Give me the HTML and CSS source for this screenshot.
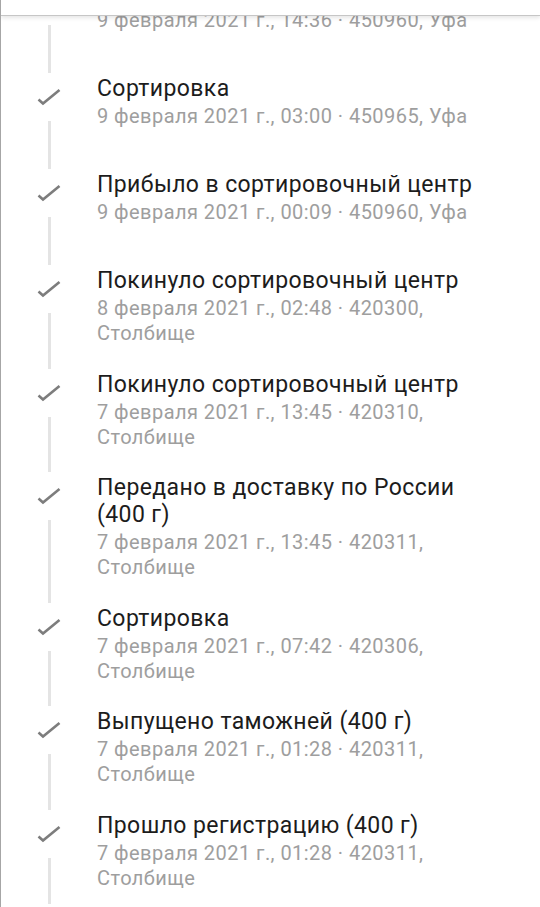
FILE: index.html
```html
<!DOCTYPE html>
<html lang="ru">
<head>
<meta charset="utf-8">
<title>Отслеживание</title>
<link rel="stylesheet" href="styles.css">
</head>
<body>
<div class="page">
  <div class="topbar"></div>
  <ul class="timeline">
    <li class="event">
      <div class="rail"><span class="seg seg-top"></span><span class="check"><svg viewBox="0 0 28 28" width="28" height="28"><polyline points="3.5,16.5 8,20.5 24.5,7"/></svg></span><span class="seg seg-bot"></span></div>
      <div class="info"><div class="title">Обработка</div><div class="meta">9 февраля 2021 г., 14:36 · 450960, Уфа</div></div>
    </li>
    <li class="event">
      <div class="rail"><span class="seg seg-top"></span><span class="check"><svg viewBox="0 0 28 28" width="28" height="28"><polyline points="3.5,16.5 8,20.5 24.5,7"/></svg></span><span class="seg seg-bot"></span></div>
      <div class="info"><div class="title">Сортировка</div><div class="meta">9 февраля 2021 г., 03:00 · 450965, Уфа</div></div>
    </li>
    <li class="event">
      <div class="rail"><span class="seg seg-top"></span><span class="check"><svg viewBox="0 0 28 28" width="28" height="28"><polyline points="3.5,16.5 8,20.5 24.5,7"/></svg></span><span class="seg seg-bot"></span></div>
      <div class="info"><div class="title">Прибыло в сортировочный центр</div><div class="meta">9 февраля 2021 г., 00:09 · 450960, Уфа</div></div>
    </li>
    <li class="event">
      <div class="rail"><span class="seg seg-top"></span><span class="check"><svg viewBox="0 0 28 28" width="28" height="28"><polyline points="3.5,16.5 8,20.5 24.5,7"/></svg></span><span class="seg seg-bot"></span></div>
      <div class="info"><div class="title">Покинуло сортировочный центр</div><div class="meta">8 февраля 2021 г., 02:48 · 420300, Столбище</div></div>
    </li>
    <li class="event">
      <div class="rail"><span class="seg seg-top"></span><span class="check"><svg viewBox="0 0 28 28" width="28" height="28"><polyline points="3.5,16.5 8,20.5 24.5,7"/></svg></span><span class="seg seg-bot"></span></div>
      <div class="info"><div class="title">Покинуло сортировочный центр</div><div class="meta">7 февраля 2021 г., 13:45 · 420310, Столбище</div></div>
    </li>
    <li class="event">
      <div class="rail"><span class="seg seg-top"></span><span class="check"><svg viewBox="0 0 28 28" width="28" height="28"><polyline points="3.5,16.5 8,20.5 24.5,7"/></svg></span><span class="seg seg-bot"></span></div>
      <div class="info"><div class="title">Передано в доставку по России (400&nbsp;г)</div><div class="meta">7 февраля 2021 г., 13:45 · 420311, Столбище</div></div>
    </li>
    <li class="event">
      <div class="rail"><span class="seg seg-top"></span><span class="check"><svg viewBox="0 0 28 28" width="28" height="28"><polyline points="3.5,16.5 8,20.5 24.5,7"/></svg></span><span class="seg seg-bot"></span></div>
      <div class="info"><div class="title">Сортировка</div><div class="meta">7 февраля 2021 г., 07:42 · 420306, Столбище</div></div>
    </li>
    <li class="event">
      <div class="rail"><span class="seg seg-top"></span><span class="check"><svg viewBox="0 0 28 28" width="28" height="28"><polyline points="3.5,16.5 8,20.5 24.5,7"/></svg></span><span class="seg seg-bot"></span></div>
      <div class="info"><div class="title">Выпущено таможней (400&nbsp;г)</div><div class="meta">7 февраля 2021 г., 01:28 · 420311, Столбище</div></div>
    </li>
    <li class="event">
      <div class="rail"><span class="seg seg-top"></span><span class="check"><svg viewBox="0 0 28 28" width="28" height="28"><polyline points="3.5,16.5 8,20.5 24.5,7"/></svg></span><span class="seg seg-bot"></span></div>
      <div class="info"><div class="title">Прошло регистрацию (400&nbsp;г)</div><div class="meta">7 февраля 2021 г., 01:28 · 420311, Столбище</div></div>
    </li>
  </ul>
</div>
</body>
</html>
```
FILE: styles.css
```css
html, body {
  margin: 0;
  padding: 0;
  background: #ffffff;
}
body {
  font-family: Roboto, "Noto Sans", "Liberation Sans", sans-serif;
  overflow: hidden;
}
.page {
  position: relative;
  height: 907px;
  overflow: hidden;
  border-left: 1px solid #a6a6a6;
  box-sizing: border-box;
}
.topbar {
  position: absolute;
  top: 0;
  left: 0;
  right: 0;
  height: 15px;
  background: #ffffff;
  border-bottom: 1px solid #c6c6c6;
  box-shadow: 0 2px 4px rgba(0, 0, 0, 0.10);
  z-index: 2;
}
.timeline {
  list-style: none;
  margin: -32px 0 0 0;
  padding: 0;
}
.event {
  display: flex;
  min-height: 96px;
}
.rail {
  width: 96px;
  flex: none;
  display: flex;
  flex-direction: column;
  align-items: center;
}
.seg {
  width: 3px;
  background: #e4e4e4;
}
.seg-top {
  height: 9px;
  flex: none;
}
.seg-bot {
  flex: 1;
}
.check {
  height: 48px;
  display: flex;
  align-items: center;
  justify-content: center;
}
.check svg {
  display: block;
}
.check polyline {
  fill: none;
  stroke: #7d7d7d;
  stroke-width: 2.6;
  stroke-linejoin: miter;
  stroke-linecap: butt;
}
.info {
  flex: 1;
  padding: 11px 36px 13.5px 0;
}
.title {
  font-size: 23px;
  line-height: 27px;
  letter-spacing: 0.4px;
  color: #1c1c1c;
}
.meta {
  margin-top: 2px;
  font-size: 20px;
  line-height: 25px;
  letter-spacing: 0.45px;
  color: #9e9e9e;
}
```
